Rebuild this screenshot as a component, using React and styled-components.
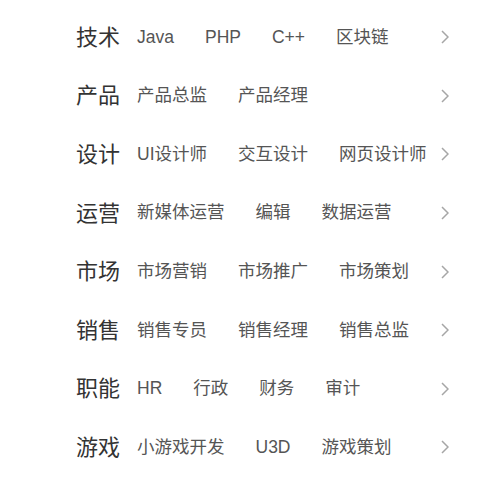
import React from "react";
import styled, { createGlobalStyle } from "styled-components";

const Global = createGlobalStyle`
  html, body { margin: 0; padding: 0; background: #fff; }
  body { font-family: "Liberation Sans", "Noto Sans CJK SC", sans-serif; }
`;

const List = styled.div`
  display: flex;
  flex-direction: column;
  padding: 8px 33px 0 76px;
`;

const Row = styled.div`
  display: flex;
  align-items: center;
  height: 58.6px;
`;

const Title = styled.div`
  font-family: "Noto Sans CJK SC", sans-serif;
  font-size: 22px;
  color: #333;
  width: 61px;
  flex: none;
  line-height: 1;
  padding-bottom: 5px;
`;

const Items = styled.div`
  display: flex;
  flex: 1;
  min-width: 0;
  align-items: center;
  gap: 31px;
`;

const Item = styled.span`
  font-size: 17.5px;
  color: #555;
  white-space: nowrap;
  line-height: 1;
  font-family: "Liberation Sans", "Noto Sans CJK SC", sans-serif;
`;

const Arrow = styled.svg`
  flex: none;
  width: 8px;
  height: 14px;
`;

const data = [
  ["技术", ["Java", "PHP", "C++", "区块链"]],
  ["产品", ["产品总监", "产品经理"]],
  ["设计", ["UI设计师", "交互设计", "网页设计师"]],
  ["运营", ["新媒体运营", "编辑", "数据运营"]],
  ["市场", ["市场营销", "市场推广", "市场策划"]],
  ["销售", ["销售专员", "销售经理", "销售总监"]],
  ["职能", ["HR", "行政", "财务", "审计"]],
  ["游戏", ["小游戏开发", "U3D", "游戏策划"]],
];

export default function App() {
  return (
    <>
      <Global />
      <List>
        {data.map(([t, items]) => (
          <Row key={t}>
            <Title>{t}</Title>
            <Items>
              {items.map((i) => (
                <Item key={i}>{i}</Item>
              ))}
            </Items>
            <Arrow viewBox="0 0 8 14">
              <polyline points="1,1 7,7 1,13" fill="none" stroke="#a6a6a6" strokeWidth="1.5" />
            </Arrow>
          </Row>
        ))}
      </List>
    </>
  );
}
